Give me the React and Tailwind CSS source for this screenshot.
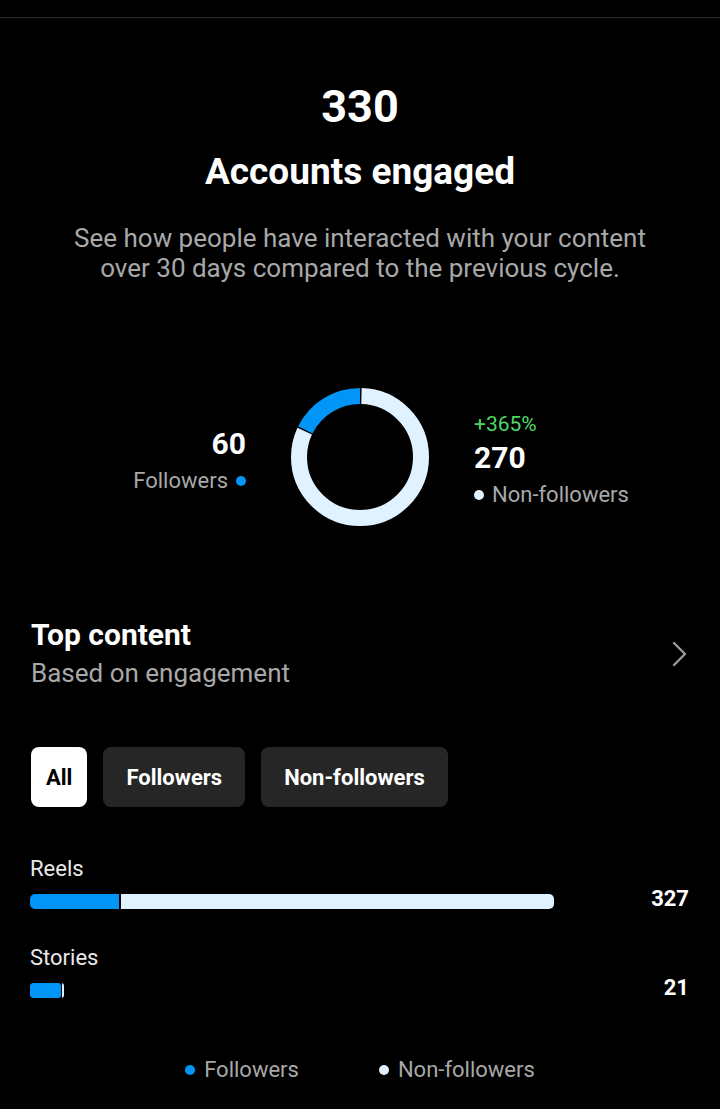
import React from 'react';

const BLUE = '#0095f6';
const LIGHT = '#e0f1ff';

const Donut = ({ followers, total }) => {
  const r = 61;
  const c = 2 * Math.PI * r;
  const blueLen = (followers / total) * c;
  const gap = 1.5;
  const lightLen = c - blueLen;
  return (
    <svg width="140" height="140" viewBox="0 0 140 140">
      <g transform="rotate(-90 70 70)">
        <circle
          cx="70" cy="70" r={r} fill="none" stroke={LIGHT} strokeWidth="16"
          strokeDasharray={`${lightLen - gap} ${c}`}
          strokeDashoffset={-gap}
        />
        <circle
          cx="70" cy="70" r={r} fill="none" stroke={BLUE} strokeWidth="16"
          strokeDasharray={`${blueLen - gap} ${c}`}
          strokeDashoffset={-(lightLen + gap)}
        />
      </g>
    </svg>
  );
};

const Dot = ({ color }) => (
  <span className="inline-block w-[10px] h-[10px] rounded-full" style={{ backgroundColor: color }}></span>
);

const BarRow = ({ label, value, max }) => {
  const fullWidth = 524;
  const w = (value / max) * fullWidth;
  return (
    <div>
      <p className="text-[22px] leading-[28px] text-[#e8e8e8]">{label}</p>
      <div className="flex items-center h-[15px] mt-[11px]">
        <div className="w-[524px] h-[15px] flex">
          {value === max ? (
            <div className="h-full flex rounded-[5px] overflow-hidden" style={{ width: w }}>
              <div className="h-full bg-[#0095f6]" style={{ width: 89 }}></div>
              <div className="h-full w-[2px] bg-black"></div>
              <div className="h-full flex-1 bg-[#e0f1ff]"></div>
            </div>
          ) : (
            <div className="h-full flex rounded-[3px] overflow-hidden" style={{ width: w }}>
              <div className="h-full flex-1 bg-[#0095f6] rounded-[3px]"></div>
              <div className="h-full w-[1px] bg-black"></div>
              <div className="h-full w-[2px] bg-[#e0f1ff]"></div>
            </div>
          )}
        </div>
        <span className="ml-auto mb-[6px] text-[22px] font-bold text-white leading-[15px]">{value}</span>
      </div>
    </div>
  );
};

export default function App() {
  return (
    <div className="min-h-screen bg-black text-white font-['Roboto',sans-serif] overflow-hidden">
      <div className="h-[17px]"></div>
      <div className="h-px bg-[#2c2c2c]"></div>

      <div className="flex flex-col items-center text-center">
        <h1 className="mt-[65px] text-[45px] leading-[48px] font-bold">330</h1>
        <h2 className="mt-[21px] text-[37px] leading-[40px] font-bold">Accounts engaged</h2>
        <p className="mt-[31px] text-[26px] leading-[30px] text-[#a8a8a8]">
          See how people have interacted with your content
          <br />
          over 30 days compared to the previous cycle.
        </p>
      </div>

      <div className="mt-[104px] grid grid-cols-[1fr_auto_1fr] items-center gap-x-[44px]">
        <div className="flex flex-col items-end pt-[7px]">
          <span className="text-[30px] leading-[34px] font-bold">60</span>
          <span className="flex items-center gap-[8px] text-[22px] leading-[28px] text-[#a8a8a8] mt-[6px]">
            Followers <Dot color={BLUE} />
          </span>
        </div>
        <Donut followers={60} total={330} />
        <div className="flex flex-col items-start pt-[7px]">
          <span className="text-[21px] leading-[24px] text-[#4cd964]">+365%</span>
          <span className="text-[30px] leading-[34px] font-bold mt-[5px]">270</span>
          <span className="flex items-center gap-[8px] text-[22px] leading-[28px] text-[#a8a8a8] mt-[6px]">
            <Dot color={LIGHT} /> Non-followers
          </span>
        </div>
      </div>

      <div className="mt-[92px] px-[31px] flex items-center justify-between">
        <div>
          <h3 className="text-[30px] leading-[32px] font-bold">Top content</h3>
          <p className="mt-[7px] text-[26px] leading-[30px] text-[#a8a8a8]">Based on engagement</p>
        </div>
        <svg width="18" height="28" viewBox="0 0 18 28">
          <path d="M3 3 L14 14 L3 25" fill="none" stroke="#9a9a9a" strokeWidth="2.4" strokeLinecap="round" strokeLinejoin="round" />
        </svg>
      </div>

      <div className="mt-[59px] px-[31px] flex gap-[16px]">
        <button className="h-[60px] px-[15px] rounded-[8px] bg-white text-black text-[22px] font-bold">All</button>
        <button className="h-[60px] px-[23px] rounded-[8px] bg-[#262626] text-white text-[22px] font-bold">Followers</button>
        <button className="h-[60px] px-[23px] rounded-[8px] bg-[#262626] text-white text-[22px] font-bold">Non-followers</button>
      </div>

      <div className="mt-[48px] pl-[30px] pr-[31px]">
        <BarRow label="Reels" value={327} max={327} />
        <div className="mt-[35px]">
          <BarRow label="Stories" value={21} max={327} />
        </div>
      </div>

      <div className="mt-[58px] flex justify-center gap-[80px] text-[22px] leading-[28px] text-[#a8a8a8]">
        <span className="flex items-center gap-[9px]"><Dot color={BLUE} /> Followers</span>
        <span className="flex items-center gap-[9px]"><Dot color={LIGHT} /> Non-followers</span>
      </div>
    </div>
  );
}
